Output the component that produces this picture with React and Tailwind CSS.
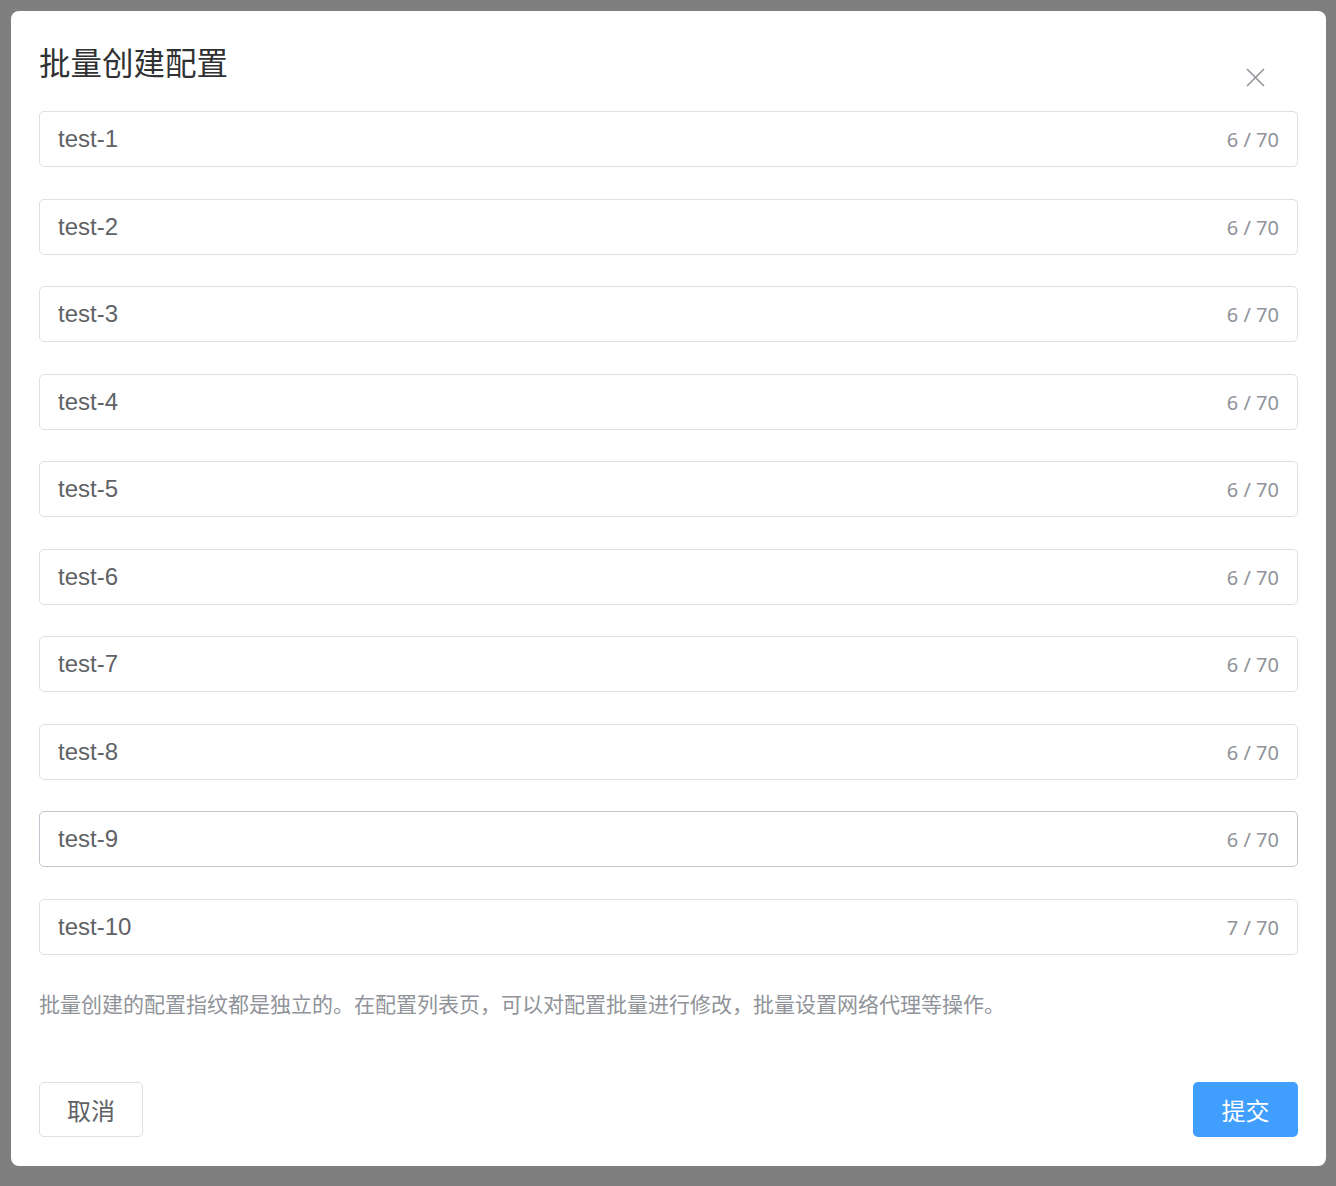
import { useState } from 'react'

// batch-create dialog over a dimmed page
const initialNames = Array.from({ length: 10 }, (_, i) => `test-${i + 1}`)

export default function App() {
  const [names, setNames] = useState(initialNames)

  return (
    <div className="min-h-screen w-full bg-[#7f7f7f] pt-[11px] pb-[20px] pl-[11px] font-['Noto_Sans','Noto_Sans_CJK_SC',sans-serif]">
      <div className="w-[1315px] h-[1155px] bg-white rounded-[8px] px-[28px] flex flex-col">
        {/* header */}
        <div className="flex justify-between items-start pt-[30px] h-[100px]">
          <h2 className="text-[31.5px] leading-[40px] text-[#303133] font-normal font-['Noto_Sans_CJK_SC',sans-serif]">
            批量创建配置
          </h2>
          <button className="mt-[27px] mr-[33px] text-[#909399]" aria-label="close">
            <svg width="19" height="19" viewBox="0 0 19 19" fill="none" stroke="currentColor" strokeWidth="1.6">
              <path d="M1 1L18 18M18 1L1 18" />
            </svg>
          </button>
        </div>

        {/* inputs */}
        <div className="flex flex-col gap-[31.5px]">
          {names.map((name, i) => (
            <div
              key={i}
              className={`h-[56px] rounded-[5px] border flex items-center px-[18px] ${i === 8 ? 'border-[#c0c4cc]' : 'border-[#dcdfe6]'}`}
            >
              <input
                value={name}
                maxLength={70}
                onChange={e => {
                  const next = [...names]
                  next[i] = e.target.value
                  setNames(next)
                }}
                className="flex-1 outline-none bg-transparent text-[24px] text-[#606266] font-['Liberation_Sans',Arial,sans-serif]"
              />
              <span className="text-[20px] text-[#909399] pt-[2px] font-['Noto_Sans',sans-serif]">
                {name.length} / 70
              </span>
            </div>
          ))}
        </div>

        <p className="mt-[33px] text-[21px] leading-[30px] text-[#909399] font-['Noto_Sans_CJK_SC',sans-serif]">
          批量创建的配置指纹都是独立的。在配置列表页，可以对配置批量进行修改，批量设置网络代理等操作。
        </p>

        {/* footer */}
        <div className="mt-auto mb-[29px] flex justify-between font-['Noto_Sans_CJK_SC',sans-serif]">
          <button className="w-[104px] h-[55px] rounded-[5px] border border-[#dcdfe6] text-[24px] text-[#606266] bg-white">
            取消
          </button>
          <button className="w-[105px] h-[55px] rounded-[5px] bg-[#409eff] text-[24px] text-white">
            提交
          </button>
        </div>
      </div>
    </div>
  )
}
